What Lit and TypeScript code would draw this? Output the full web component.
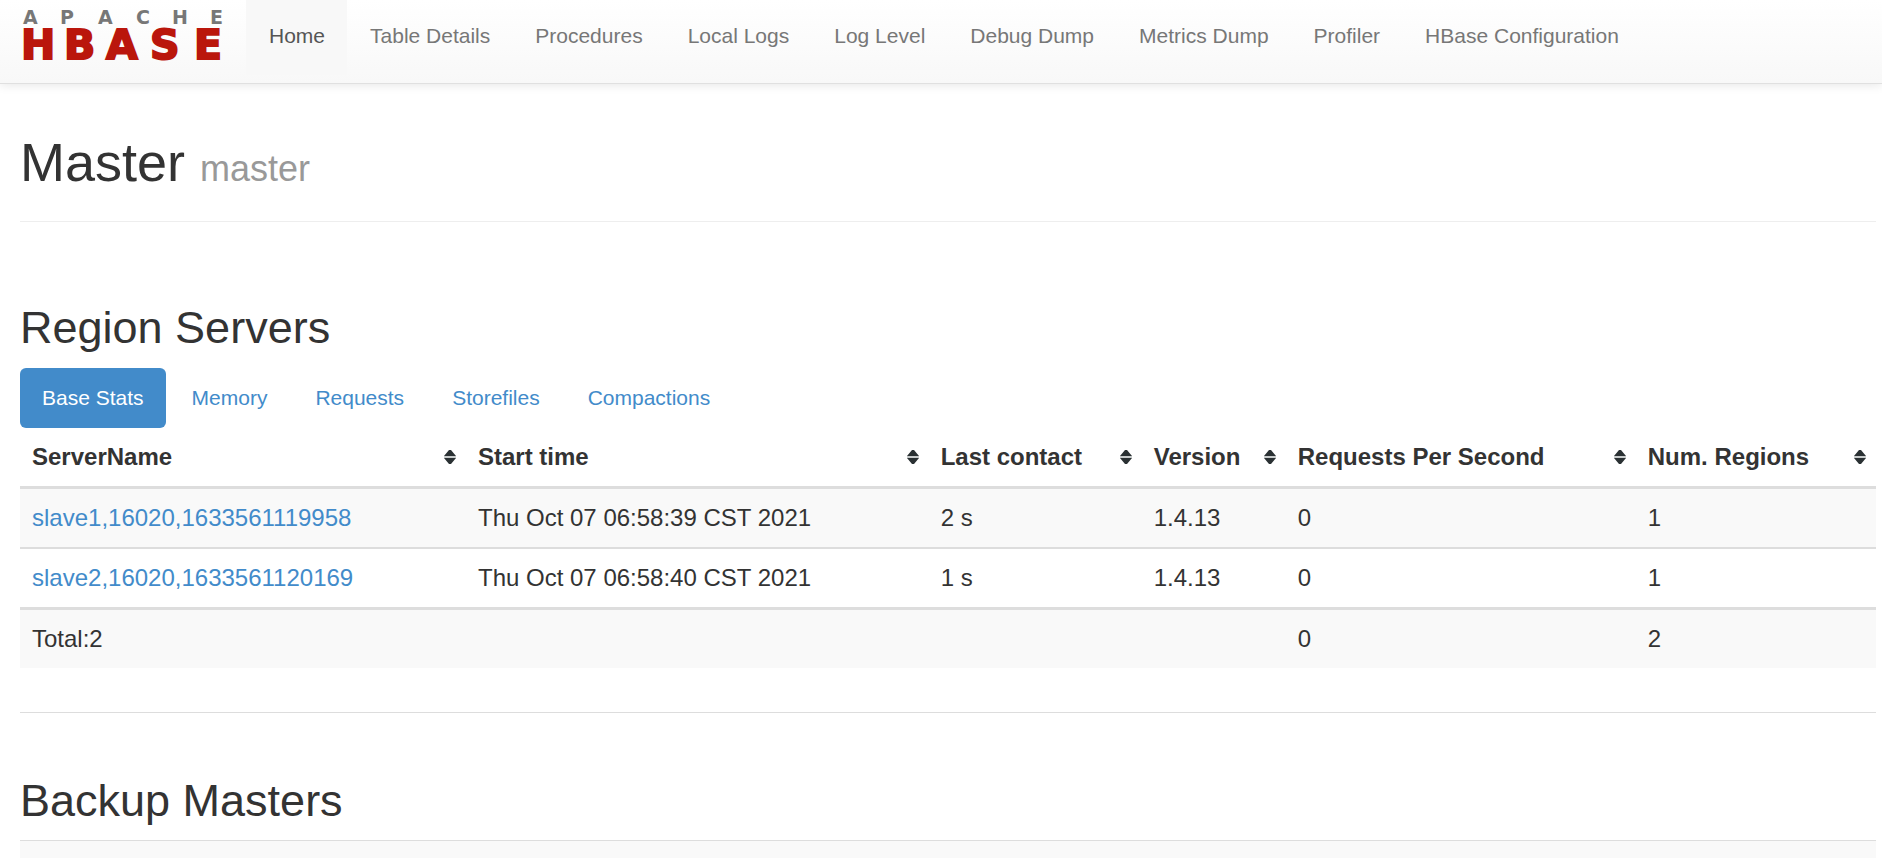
import { LitElement, html, css } from "lit";
import { customElement, state } from "lit/decorators.js";

const NAV = ["Home", "Table Details", "Procedures", "Local Logs", "Log Level", "Debug Dump", "Metrics Dump", "Profiler", "HBase Configuration"];
const TABS = ["Base Stats", "Memory", "Requests", "Storefiles", "Compactions"];
const COLUMNS = ["ServerName", "Start time", "Last contact", "Version", "Requests Per Second", "Num. Regions"];
const SERVERS = [
  ["slave1,16020,1633561119958", "Thu Oct 07 06:58:39 CST 2021", "2 s", "1.4.13", "0", "1"],
  ["slave2,16020,1633561120169", "Thu Oct 07 06:58:40 CST 2021", "1 s", "1.4.13", "0", "1"],
];

@customElement("hbase-logo")
class HbaseLogo extends LitElement {
  static styles = css`
    :host { display: block; }
    svg { display: block; font-family: "DejaVu Sans", sans-serif; font-weight: bold; }
    .apache { font-size: 19px; fill: #777; }
    .hbase { font-size: 41px; fill: #ba160c; stroke: #ba160c; stroke-width: 2; }
  `;
  render() {
    return html`<svg width="208" height="74" viewBox="-3 -9 208 74" role="img" aria-label="Apache HBase">
      <text class="apache" x="0 37 75 113 149 187" y="15">APACHE</text>
      <text class="hbase" x="-2 41 83 127 171" y="50">HBASE</text>
    </svg>`;
  }
}

@customElement("app-root")
class AppRoot extends LitElement {
  @state() private tab = 0;

  static styles = css`
    :host {
      display: block;
      height: 100vh;
      overflow: hidden;
      background: #fff;
      color: #333;
      font-family: "Liberation Sans", Arial, sans-serif;
      font-size: 24px;
      line-height: 34px;
    }
    a { color: #428bca; text-decoration: none; }
    .navbar {
      display: flex;
      align-items: flex-start;
      height: 83px;
      padding-left: 20px;
      background: linear-gradient(#fff, #f8f8f8);
      border-bottom: 1px solid #e0e0e0;
      box-shadow: 0 1px 10px rgba(0, 0, 0, 0.1);
    }
    .brand { padding-right: 18px; }
    .nav { display: flex; margin: 0; padding: 0; list-style: none; font-size: 21px; line-height: 30px; }
    .nav a { display: block; padding: 21px 22px 24px 23px; color: #777; }
    .nav .active { background: #f8f8f8; color: #555; }
    .content { padding: 0 6px 0 20px; }
    h1, h2 { margin: 0; font-weight: normal; }
    h1 { padding: 48px 0 22px; font-size: 54px; line-height: 60px; border-bottom: 1px solid #eee; }
    small { font-size: 36px; color: #999; }
    h2 { font-size: 45px; line-height: 50px; }
    .servers { padding-top: 81px; }
    .tabs { display: flex; gap: 4px; padding-top: 15px; font-size: 21px; line-height: 30px; }
    .tab {
      padding: 15px 22px;
      border: 0;
      border-radius: 6px;
      background: none;
      color: #428bca;
      font: inherit;
      cursor: pointer;
    }
    .tab.active { background: #428bca; color: #fff; }
    table { width: 100%; table-layout: fixed; border-spacing: 0; }
    .name { width: 24.03%; }
    .start { width: 24.93%; }
    .contact { width: 11.48%; }
    .version { width: 7.76%; }
    .requests { width: 18.86%; }
    th, td { padding: 12px; text-align: left; white-space: nowrap; }
    th { border-bottom: 3px solid #ddd; }
    .label { display: flex; align-items: center; justify-content: space-between; margin-right: -2px; }
    tr + tr td { border-top: 2px solid #ddd; }
    tr:nth-child(odd) td { background: #f9f9f9; }
    tfoot td { border-top: 3px solid #ddd; }
    hr { margin: 44px 0 0; border: 0; border-top: 1px solid #ddd; }
    .backup { padding: 63px 0 14px; }
    .masters td { height: 34px; border-top: 1px solid #ddd; }
  `;

  render() {
    return html`
      <header class="navbar">
        <a class="brand" href="#"><hbase-logo></hbase-logo></a>
        <nav><ul class="nav">
          ${NAV.map((n, i) => html`<li><a href="#" class=${i === 0 ? "active" : ""}>${n}</a></li>`)}
        </ul></nav>
      </header>
      <main class="content">
        <h1>Master <small>master</small></h1>
        <section class="servers">
          <h2>Region Servers</h2>
          <div class="tabs" role="tablist">
            ${TABS.map((t, i) => html`<button role="tab" aria-selected=${i === this.tab} class="tab ${i === this.tab ? "active" : ""}" @click=${() => (this.tab = i)}>${t}</button>`)}
          </div>
          <table>
            <colgroup><col class="name"><col class="start"><col class="contact"><col class="version"><col class="requests"><col></colgroup>
            <thead><tr>
              ${COLUMNS.map((c) => html`<th scope="col"><div class="label">${c}
                <svg width="12" height="14" viewBox="0 0 12 14" aria-hidden="true">
                  <path d="M5 0H7L12 6H0Z M0 8H12L7 14H5Z" fill="#2a3133"/><path d="M0 6H12V8H0Z" fill="#c8cccc"/>
                </svg></div></th>`)}
            </tr></thead>
            <tbody>
              ${SERVERS.map((r) => html`<tr>${r.map((v, i) => html`<td>${i === 0 ? html`<a href="#">${v}</a>` : v}</td>`)}</tr>`)}
            </tbody>
            <tfoot><tr><td>Total:2</td><td></td><td></td><td></td><td>0</td><td>2</td></tr></tfoot>
          </table>
        </section>
        <hr>
        <section>
          <h2 class="backup">Backup Masters</h2>
          <table class="masters"><tbody><tr><td></td></tr></tbody></table>
        </section>
      </main>`;
  }
}
